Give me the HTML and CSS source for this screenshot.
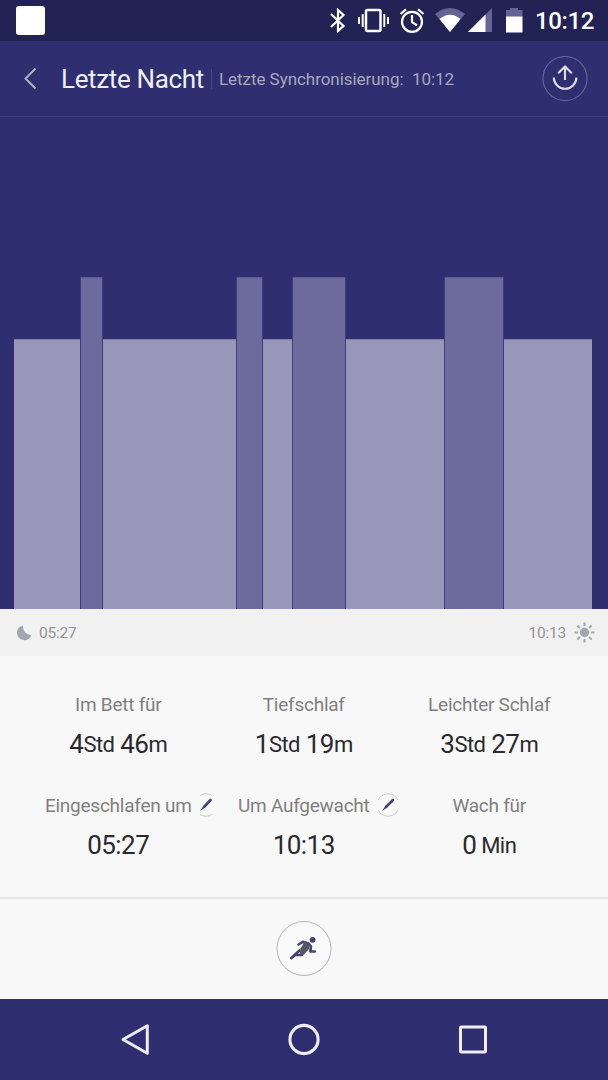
FILE: index.html
```html
<!DOCTYPE html>
<html lang="de">
<head>
<meta charset="utf-8">
<title>Letzte Nacht</title>
<link rel="stylesheet" href="styles.css">
</head>
<body>
<div class="status">
  <span class="notification"></span>
  <div class="status-icons">
    <svg class="bluetooth" width="18" height="26" viewBox="329 8 18 26"><path d="M331 14 343.500 26l-5.500 5V10l5.500 5L331 27" fill="none" stroke="#fff" stroke-width="2.200"/></svg>
    <svg class="vibrate" width="32" height="26" viewBox="357 8 32 26"><rect x="366" y="10" width="14.500" height="21" rx="1.500" fill="none" stroke="#fff" stroke-width="2.500"/><path d="M359 17v7M362.700 14v13M388 17v7M384.300 14v13" stroke="#fff" stroke-width="2"/></svg>
    <svg class="alarm" width="26" height="26" viewBox="399 8 26 26" fill="none" stroke="#fff" stroke-width="2.200"><circle cx="412" cy="21.800" r="10"/><path d="M412 15v7.200l5 3M400.500 14l5.500-4.700M423.500 14l-5.500-4.700"/></svg>
    <svg class="wifi" width="32" height="26" viewBox="434 8 32 26"><path d="M435 14Q450 2 465 14L450 32Z" fill="#656394"/><path d="M439.500 19Q450 10.500 460.500 19L450 32Z" fill="#fff"/></svg>
    <svg class="signal" width="25" height="26" viewBox="468 8 25 26"><path d="M468 32 492 8v24Z" fill="#656394"/><path d="M468 32 485.500 14.500V32Z" fill="#fff"/></svg>
    <svg class="battery" width="18" height="26" viewBox="505 8 18 26"><path d="M506 10h4V8h8v2h4.500v7H506Z" fill="#656394"/><path d="M506 16.500h16.500v16H506Z" fill="#fff"/></svg>
  </div>
  <span class="clock">10:12</span>
</div>

<header class="header">
  <svg class="back" width="14" height="24" viewBox="0 0 14 24"><path d="M12.500 1.500 2.500 11.500l10 10" fill="none" stroke="#b3b2bf" stroke-width="1.900"/></svg>
  <h1 class="title">Letzte Nacht</h1>
  <span class="divider"></span>
  <span class="sync">Letzte Synchronisierung:</span>
  <span class="sync-time">10:12</span>
  <svg class="share" width="46" height="46" viewBox="0 0 46 46" fill="none"><circle cx="23" cy="22.500" r="22" stroke="#64629a" stroke-width="1.200"/><path d="M11.800 21.500a11.300 11.300 0 0 0 22.600 0M23 24V10.500M16.200 17.300 23 10.500l6.800 6.800" stroke="#dddde4" stroke-width="2.100"/></svg>
</header>

<div class="chart">
  <i class="bar light" style="width:66px"></i>
  <i class="bar deep" style="width:21px"></i>
  <i class="bar light" style="width:133px"></i>
  <i class="bar deep" style="width:25px"></i>
  <i class="bar light" style="width:29px"></i>
  <i class="bar deep" style="width:52px"></i>
  <i class="bar light" style="width:98px"></i>
  <i class="bar deep" style="width:58px"></i>
  <i class="bar light" style="width:88px"></i>
</div>

<div class="range">
  <svg width="16" height="16" viewBox="0 0 16 16"><path d="M7 .5A7.400 7.400 0 1 0 15.300 10.200 8.500 8.500 0 0 1 7 .5Z" fill="#a5a5b0"/></svg>
  <span class="range-start">05:27</span>
  <span class="range-end">10:13</span>
  <svg width="22" height="22" viewBox="0 0 22 22"><circle cx="11.500" cy="10.500" r="4.700" fill="#a5a5b0"/><path d="M11.500 .5V4M11.500 17v3.500M1.500 10.500H5M18 10.500h3.500M4.400 3.400l2.500 2.500M16.100 15.100l2.500 2.500M4.400 17.600l2.500-2.500M16.100 5.900l2.500-2.500" stroke="#a5a5b0" stroke-width="2.100"/></svg>
</div>

<main class="stats">
  <section class="stat"><div class="label">Im Bett für</div><div class="value">4<small>Std</small> 46<small>m</small></div></section>
  <section class="stat"><div class="label">Tiefschlaf</div><div class="value">1<small>Std</small> 19<small>m</small></div></section>
  <section class="stat"><div class="label">Leichter Schlaf</div><div class="value">3<small>Std</small> 27<small>m</small></div></section>
  <section class="stat"><div class="label">Eingeschlafen um<svg class="edit edit-narrow" width="12" height="24" viewBox="6 0 12 24"><circle cx="12" cy="12" r="11.300" fill="none" stroke="#c4c4c9" stroke-width=".9"/><path d="M10.500 13.500 16.500 7" stroke="#45436f" stroke-width="2.600" stroke-linecap="round"/><path d="M9.500 12.800 11.200 14.500 6 18Z" fill="#45436f"/></svg></div><div class="value">05:27</div></section>
  <section class="stat"><div class="label">Um Aufgewacht<svg class="edit edit-wide" width="20" height="24" viewBox="2 0 20 24"><circle cx="12" cy="12" r="11.300" fill="none" stroke="#c4c4c9" stroke-width=".9"/><path d="M10 14 17 7" stroke="#45436f" stroke-width="2.600" stroke-linecap="round"/><path d="M9.500 12.800 11.200 14.500 6 18Z" fill="#45436f"/></svg></div><div class="value">10:13</div></section>
  <section class="stat"><div class="label">Wach für</div><div class="value">0<small> Min</small></div></section>
</main>

<div class="activity">
  <svg width="56" height="56" viewBox="276 920.500 56 56"><circle cx="304" cy="948" r="27" fill="#fafafa" stroke="#b4b3bd"/><circle cx="312.600" cy="939.300" r="2.900" fill="#46446d"/><g fill="none" stroke="#46446d" stroke-width="2.600" stroke-linecap="round" stroke-linejoin="round"><path d="M298.500 944 303 941.300 308.500 943 311 946 310.300 951H314.800"/><path d="M291.200 957.700 299.500 950M292 957 295.500 954.500 302 954.500 303.500 949"/></g><path d="M304.500 941.500 309.800 944 309 948.500 304 954 299.800 953 300.500 948Z" fill="#55556c"/></svg>
</div>

<nav class="navbar">
  <svg width="30" height="34" viewBox="0 0 30 34"><path d="M3 16.500 27.300 2.700v27.600Z" fill="none" stroke="#eeedf2" stroke-width="3" stroke-linejoin="round"/></svg>
  <svg width="32" height="34" viewBox="0 0 32 34"><circle cx="16" cy="16.500" r="14.100" fill="none" stroke="#eeedf2" stroke-width="3.100"/></svg>
  <svg width="30" height="34" viewBox="0 0 30 34"><rect x="2.500" y="4" width="25" height="25" rx=".8" fill="none" stroke="#eeedf2" stroke-width="3"/></svg>
</nav>
</body>
</html>
```
FILE: styles.css
```css
* { box-sizing: border-box; }
body { margin: 0; width: 608px; height: 1080px; display: flex; flex-direction: column; overflow: hidden; background: #f8f8f8; font-family: Roboto, sans-serif; }
svg { display: block; flex: none; }

.status { height: 41px; flex: none; display: flex; align-items: flex-start; background: #222254; padding: 0 14px 0 16px; color: #fff; }
.notification { width: 29px; height: 29px; margin-top: 6px; border-radius: 3px; background: #fff; }
.status-icons { display: flex; margin-left: auto; padding-top: 8px; }
.vibrate { margin-left: 10px; }
.alarm { margin-left: 10px; }
.wifi { margin-left: 9px; }
.signal { margin-left: 2px; }
.battery { margin-left: 12px; }
.clock { width: 59px; margin-left: 12px; font-size: 24px; font-weight: 500; line-height: 42px; letter-spacing: -.4px; white-space: nowrap; }

.header { height: 76px; flex: none; display: flex; align-items: center; background: #2e2e71; border-bottom: 1px solid #3e3c7a; padding: 0 20px 0 23px; white-space: nowrap; }
.title { width: 143px; margin: 0 0 0 24px; font-size: 26px; font-weight: 400; letter-spacing: -.35px; color: #efeff5; }
.divider { width: 1px; height: 20px; margin: 0 7px 0 7px; background: #4b4984; }
.sync, .sync-time { font-size: 17px; letter-spacing: -.05px; color: #a9a8b9; margin-top: 1px; }
.sync { width: 186px; }
.sync-time { margin-left: 7px; }
.share { margin-left: auto; }

.chart { height: 492px; flex: none; display: flex; align-items: flex-end; gap: 1px; padding-left: 14px; background: #2e2e71; }
.bar { display: block; flex: none; }
.light { height: 270px; background: #9896b9; border-top: 1px solid #8280aa; }
.deep { height: 332px; background: #6d6b9d; border-top: 1px solid #5a588e; box-shadow: -1px 0 #403d7c, 1px 0 #403d7c; }

.range { height: 47px; flex: none; display: flex; align-items: center; background: #f1f1f1; padding: 0 13px 0 16px; font-size: 15.500px; letter-spacing: -.2px; color: #949494; }
.range-start { margin-left: 7px; }
.range-end { margin-left: auto; margin-right: 7px; }

.stats { height: 241px; flex: none; display: grid; grid-template-columns: repeat(3, 185.500px); grid-template-rows: 101px 101px; padding: 34px 0 0 25.500px; }
.stat { text-align: center; white-space: nowrap; }
.label { height: 28px; display: flex; align-items: center; justify-content: center; font-size: 19px; letter-spacing: -.25px; color: #808080; }
.edit { margin-left: 8px; margin-top: -1px; }
.edit-narrow { margin-right: -20px; }
.edit-wide { margin-right: -28px; }
.value { height: 50px; line-height: 52px; font-size: 26px; letter-spacing: -.55px; color: #29292f; }
.value small { font-size: 22px; line-height: 1; vertical-align: 1px; }

.activity { height: 102px; flex: none; display: flex; justify-content: center; align-items: center; border-top: 2px solid #e6e6e6; }
.navbar { height: 81px; flex: none; display: flex; justify-content: space-between; align-items: center; background: #2e2e71; padding: 0 120px; }
```
